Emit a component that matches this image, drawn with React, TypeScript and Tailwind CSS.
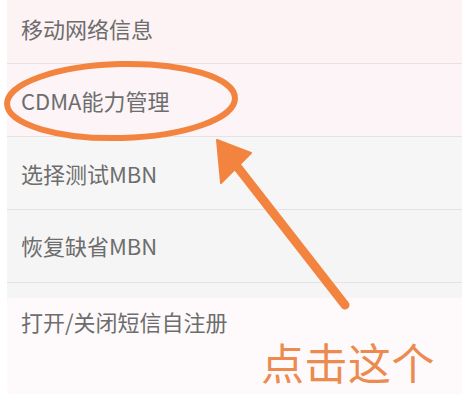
import React from 'react';

// settings list rows, with heights taken from the screenshot
const ROWS = [
  { label: '移动网络信息', h: 'h-[64px]', bg: 'bg-[#fdf2f4]', pb: 'pb-[8px]' },
  { label: 'CDMA能力管理', h: 'h-[73px]', bg: 'bg-[#fcf4f6]', pb: 'pb-0' },
  { label: '选择测试MBN', h: 'h-[73px]', bg: 'bg-[#f7f6f6]', pb: 'pb-0' },
  { label: '恢复缺省MBN', h: 'h-[73px]', bg: 'bg-[#f6f5f5]', pb: 'pb-[2px]' },
];

export default function App() {
  return (
    <div
      className="relative w-[462px] h-[394px] overflow-hidden bg-white flex"
      style={{ fontFamily: '"Noto Sans CJK SC", "Noto Sans", sans-serif' }}
    >
      <div className="w-[7px] shrink-0 bg-white" />

      <div className="flex-1 flex flex-col">
        {ROWS.map((row) => (
          <div key={row.label} className={`${row.h} ${row.bg} ${row.pb} border-b border-[#e6e2e3] flex items-center pl-[14px]`}>
            <span className="text-[22px] text-[#6d6d6d] leading-none">{row.label}</span>
          </div>
        ))}
        <div className="flex-1 flex flex-col">
          <div className="h-[15px] bg-[#f6f5f5]" />
          <div className="flex-1 bg-[#fefafb] pl-[14px] pt-[12px]">
            <span className="text-[22px] text-[#6d6d6d] leading-none">打开/关闭短信自注册</span>
          </div>
        </div>
      </div>

      {/* annotation overlay */}
      <svg className="absolute inset-0 pointer-events-none" width="462" height="394" viewBox="0 0 462 394">
        <ellipse cx="121" cy="101" rx="114" ry="37" fill="none" stroke="#f3843f" strokeWidth="6" transform="rotate(-1.5 121 101)" />
        <line x1="345" y1="305" x2="232" y2="160" stroke="#f3843f" strokeWidth="9" strokeLinecap="round" />
        <polygon points="217,140 251,153 221,183" fill="#f3843f" strokeLinejoin="round" stroke="#f3843f" strokeWidth="2" />
      </svg>

      <div className="absolute left-[261px] top-[340px] text-[43px] leading-none text-[#ec8a4f] tracking-[0.5px]">
        点击这个
      </div>
    </div>
  );
}
